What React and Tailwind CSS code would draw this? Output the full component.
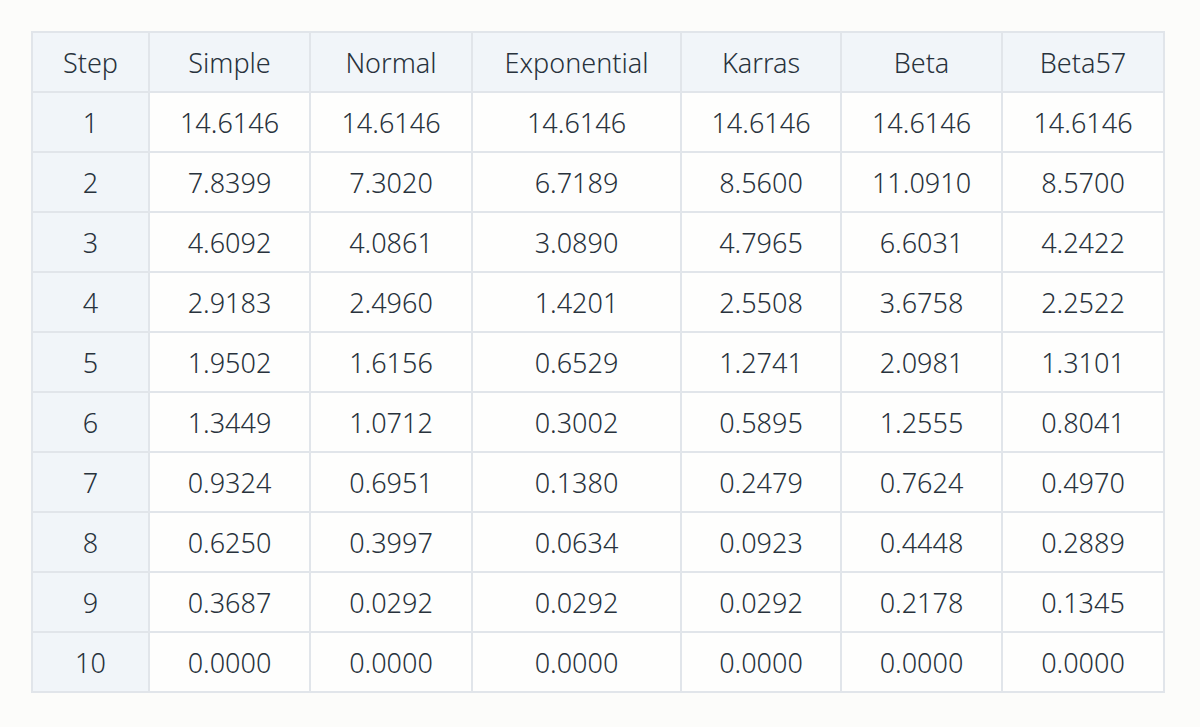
import React from "react";

const headers = ["Step", "Simple", "Normal", "Exponential", "Karras", "Beta", "Beta57"];
const widths = ["w-[117px]", "w-[161px]", "w-[162px]", "w-[209px]", "w-[160px]", "w-[161px]", "w-[162px]"];

const rows = [
  ["14.6146", "14.6146", "14.6146", "14.6146", "14.6146", "14.6146"],
  ["7.8399", "7.3020", "6.7189", "8.5600", "11.0910", "8.5700"],
  ["4.6092", "4.0861", "3.0890", "4.7965", "6.6031", "4.2422"],
  ["2.9183", "2.4960", "1.4201", "2.5508", "3.6758", "2.2522"],
  ["1.9502", "1.6156", "0.6529", "1.2741", "2.0981", "1.3101"],
  ["1.3449", "1.0712", "0.3002", "0.5895", "1.2555", "0.8041"],
  ["0.9324", "0.6951", "0.1380", "0.2479", "0.7624", "0.4970"],
  ["0.6250", "0.3997", "0.0634", "0.0923", "0.4448", "0.2889"],
  ["0.3687", "0.0292", "0.0292", "0.0292", "0.2178", "0.1345"],
  ["0.0000", "0.0000", "0.0000", "0.0000", "0.0000", "0.0000"],
];

export default function App() {
  return (
    <div className="min-h-screen w-[1200px] h-[727px] bg-[#fcfcfa] pt-[31px] pl-[31px] font-['Noto_Sans',sans-serif] font-light text-[#28323c]">
      <table className="border-collapse table-fixed w-[1134px] text-[27px] text-center">
        <colgroup>
          {widths.map((w, i) => (
            <col key={i} className={w} />
          ))}
        </colgroup>
        <thead>
          <tr className="h-[60px] bg-[#f1f5f9]">
            {headers.map((h) => (
              <th key={h} className="border-2 border-[#e1e5ea] font-light pt-[2px]">
                {h}
              </th>
            ))}
          </tr>
        </thead>
        <tbody>
          {rows.map((r, i) => (
            <tr key={i} className="h-[60px]">
              <td className="border-2 border-[#e1e5ea] bg-[#f1f5f9] pt-[2px]">{i + 1}</td>
              {r.map((v, j) => (
                <td key={j} className="border-2 border-[#e1e5ea] bg-[#fefefd] pt-[2px]">
                  {v}
                </td>
              ))}
            </tr>
          ))}
        </tbody>
      </table>
    </div>
  );
}
